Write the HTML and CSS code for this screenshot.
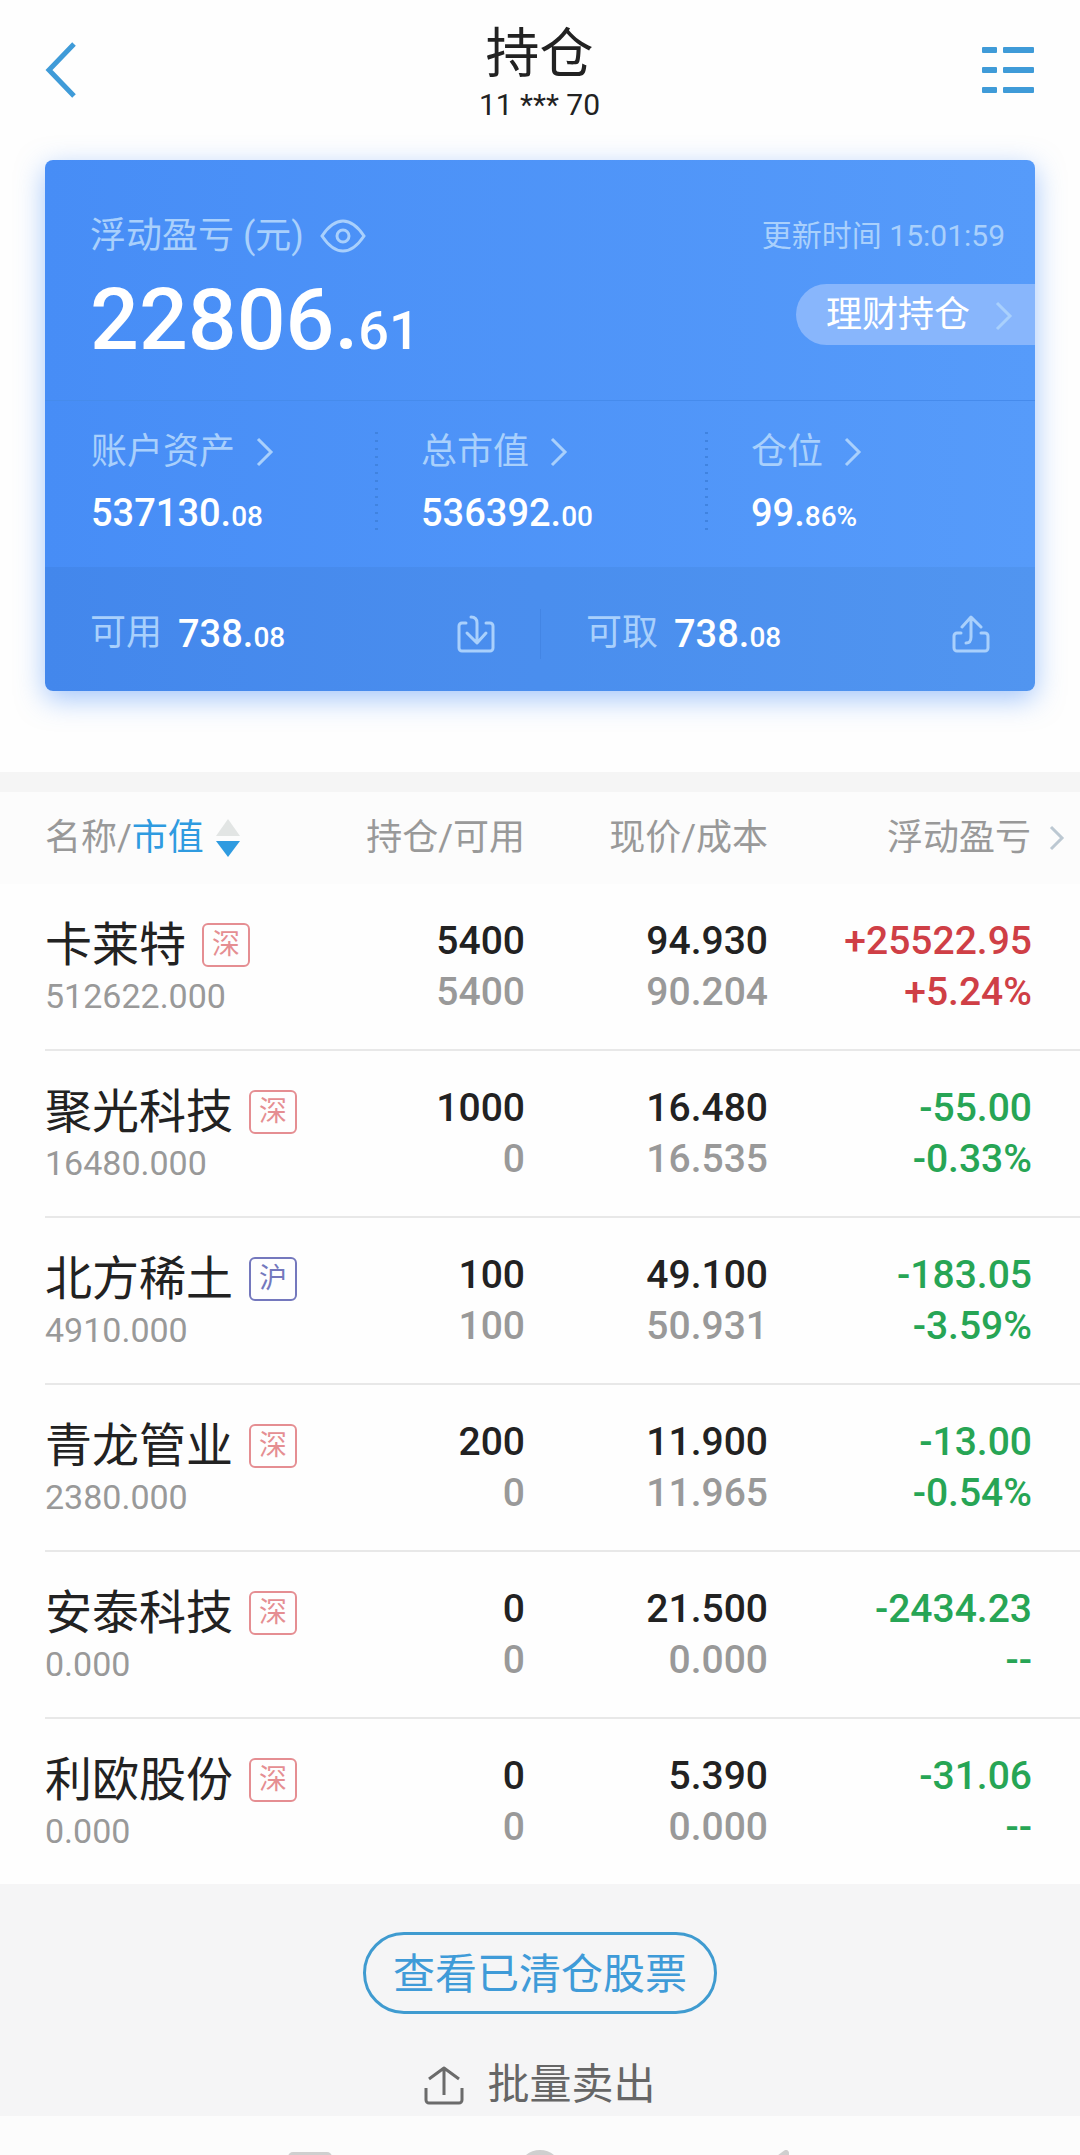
FILE: index.html
```html
<!DOCTYPE html>
<html lang="zh-CN">
<head>
<meta charset="utf-8">
<meta name="viewport" content="width=device-width, initial-scale=1">
<title>持仓</title>
<link rel="stylesheet" href="styles.css">
</head>
<body>
<header class="topbar">
  <button class="icon-button" type="button" aria-label="返回">
    <svg width="32" height="56" viewBox="0 0 32 56" fill="none" stroke="#3f9bd8" stroke-width="5"><path d="M29 2 4 28l25 26"/></svg>
  </button>
  <div class="topbar-title">
    <h1>持仓</h1>
    <p>11 *** 70</p>
  </div>
  <button class="icon-button menu" type="button" aria-label="菜单">
    <svg width="52" height="46" viewBox="0 0 52 46" fill="#3f9bd8"><rect width="15" height="6" rx="1"/><rect x="21" width="31" height="6" rx="1"/><rect y="20" width="15" height="6" rx="1"/><rect x="21" y="20" width="31" height="6" rx="1"/><rect y="40" width="15" height="6" rx="1"/><rect x="21" y="40" width="31" height="6" rx="1"/></svg>
  </button>
</header>

<main>
  <section class="card">
    <div class="summary">
      <div class="profit">
        <div class="profit-label">
          <span>浮动盈亏 (元)</span>
          <button class="icon-button" type="button" aria-label="隐藏金额">
            <svg width="46" height="34" viewBox="0 0 46 34" fill="none" stroke="#a9d0fc" stroke-width="3"><path d="M2 17C8 8 15 2 23 2s15 6 21 15c-6 9-13 15-21 15S8 26 2 17Z"/><circle cx="23" cy="17" r="6"/></svg>
          </button>
        </div>
        <p class="profit-value">22806.<small>61</small></p>
      </div>
      <div class="summary-side">
        <p class="updated">更新时间 <time>15:01:59</time></p>
        <a class="pill" href="#">理财持仓
          <svg class="chevron" width="20" height="30" viewBox="0 0 20 30"><path d="m3 2 13 13L3 28"/></svg>
        </a>
      </div>
    </div>
    <ul class="stats">
      <li>
        <a class="stat-label" href="#">账户资产 <svg class="chevron" width="20" height="30" viewBox="0 0 20 30"><path d="m3 2 13 13L3 28"/></svg></a>
        <p class="amount">537130.<small>08</small></p>
      </li>
      <li>
        <a class="stat-label" href="#">总市值 <svg class="chevron" width="20" height="30" viewBox="0 0 20 30"><path d="m3 2 13 13L3 28"/></svg></a>
        <p class="amount">536392.<small>00</small></p>
      </li>
      <li>
        <a class="stat-label" href="#">仓位 <svg class="chevron" width="20" height="30" viewBox="0 0 20 30"><path d="m3 2 13 13L3 28"/></svg></a>
        <p class="amount">99.<small>86%</small></p>
      </li>
    </ul>
    <div class="funds">
      <div class="fund">
        <span class="fund-label">可用</span>
        <span class="amount">738.<small>08</small></span>
        <button class="icon-button" type="button" aria-label="转入">
          <svg width="38" height="38" viewBox="0 0 38 38" fill="none" stroke="#a9d0fc" stroke-width="3" stroke-linecap="round" stroke-linejoin="round"><path d="M9 8H5a3 3 0 0 0-3 3v22a3 3 0 0 0 3 3h28a3 3 0 0 0 3-3V11a3 3 0 0 0-3-3h-4M14 2c4 0 6 2 6 6v19M10 18l10 10 9-10"/></svg>
        </button>
      </div>
      <div class="fund">
        <span class="fund-label">可取</span>
        <span class="amount">738.<small>08</small></span>
        <button class="icon-button" type="button" aria-label="转出">
          <svg width="38" height="38" viewBox="0 0 38 38" fill="none" stroke="#a9d0fc" stroke-width="3" stroke-linecap="round" stroke-linejoin="round"><path d="M9 18H5a3 3 0 0 0-3 3v12a3 3 0 0 0 3 3h28a3 3 0 0 0 3-3V21a3 3 0 0 0-3-3h-4M14 28c4 0 5-2 5-6V3M10 12l9-10 10 10"/></svg>
        </button>
      </div>
    </div>
  </section>

  <section class="holdings">
    <table>
      <thead>
        <tr>
          <th class="col-name" scope="col"><button class="sort" type="button"><span>名称/<b>市值</b></span><svg width="24" height="40" viewBox="0 0 24 40"><path d="M12 1l12 17H0z" fill="#e2e5e4"/><path d="M12 39l12-16H0z" fill="#2f9be0"/></svg></button></th>
          <th class="col-qty" scope="col">持仓/可用</th>
          <th class="col-price" scope="col">现价/成本</th>
          <th class="col-profit" scope="col"><div class="more">浮动盈亏<svg width="16" height="26" viewBox="0 0 16 26" fill="none" stroke="#bcc8d2" stroke-width="3"><path d="m2 2 11 11L2 24"/></svg></div></th>
        </tr>
      </thead>
      <tbody>
        <tr>
          <td><div class="stock">卡莱特 <span class="badge sz">深</span></div><div class="worth">512622.000</div></td>
          <td><div>5400</div><div class="muted">5400</div></td>
          <td><div>94.930</div><div class="muted">90.204</div></td>
          <td class="up"><div>+25522.95</div><div>+5.24%</div></td>
        </tr>
        <tr>
          <td><div class="stock">聚光科技 <span class="badge sz">深</span></div><div class="worth">16480.000</div></td>
          <td><div>1000</div><div class="muted">0</div></td>
          <td><div>16.480</div><div class="muted">16.535</div></td>
          <td class="down"><div>-55.00</div><div>-0.33%</div></td>
        </tr>
        <tr>
          <td><div class="stock">北方稀土 <span class="badge sh">沪</span></div><div class="worth">4910.000</div></td>
          <td><div>100</div><div class="muted">100</div></td>
          <td><div>49.100</div><div class="muted">50.931</div></td>
          <td class="down"><div>-183.05</div><div>-3.59%</div></td>
        </tr>
        <tr>
          <td><div class="stock">青龙管业 <span class="badge sz">深</span></div><div class="worth">2380.000</div></td>
          <td><div>200</div><div class="muted">0</div></td>
          <td><div>11.900</div><div class="muted">11.965</div></td>
          <td class="down"><div>-13.00</div><div>-0.54%</div></td>
        </tr>
        <tr>
          <td><div class="stock">安泰科技 <span class="badge sz">深</span></div><div class="worth">0.000</div></td>
          <td><div>0</div><div class="muted">0</div></td>
          <td><div>21.500</div><div class="muted">0.000</div></td>
          <td class="down"><div>-2434.23</div><div>--</div></td>
        </tr>
        <tr>
          <td><div class="stock">利欧股份 <span class="badge sz">深</span></div><div class="worth">0.000</div></td>
          <td><div>0</div><div class="muted">0</div></td>
          <td><div>5.390</div><div class="muted">0.000</div></td>
          <td class="down"><div>-31.06</div><div>--</div></td>
        </tr>
      </tbody>
    </table>
  </section>

  <section class="actions">
    <button class="cleared" type="button">查看已清仓股票</button>
    <button class="batch" type="button">
      <svg width="40" height="40" viewBox="0 0 40 40" fill="none" stroke="#6b6b6b" stroke-width="3" stroke-linejoin="round"><path d="M2 23v12a3 3 0 0 0 3 3h30a3 3 0 0 0 3-3V23M20 30V3M5 14 20 3l15 11"/></svg>
      批量卖出
    </button>
  </section>
</main>

<nav class="system-nav" aria-label="系统导航">
  <svg width="44" height="44" viewBox="0 0 44 44"><rect y="2" width="44" height="42" rx="5" fill="#cfcfcf"/></svg>
  <svg width="44" height="44" viewBox="0 0 44 44"><circle cx="22" cy="22" r="19" fill="none" stroke="#cfcfcf" stroke-width="6"/></svg>
  <svg width="44" height="44" viewBox="0 0 44 44"><path d="M38 3v38L12 22z" fill="none" stroke="#cfcfcf" stroke-width="6" stroke-linejoin="round"/></svg>
</nav>
</body>
</html>
```
FILE: styles.css
```css
* {
  box-sizing: border-box;
}

html {
  height: 100%;
}

body {
  margin: 0;
  height: 100%;
  overflow: hidden;
  background: #fefefe;
  color: #222;
  font-family: Roboto, "Noto Sans CJK SC", sans-serif;
  line-height: 1.2;
}

h1, p, ul {
  margin: 0;
  padding: 0;
  font-weight: 400;
}

ul {
  list-style: none;
}

svg {
  display: block;
  flex: none;
}

small {
  font-size: 28px;
  line-height: 0;
}

a {
  color: inherit;
  text-decoration: none;
}

button {
  padding: 0;
  border: 0;
  background: none;
  color: inherit;
  font: inherit;
}

/* Top bar */

.topbar {
  display: grid;
  grid-template-columns: 1fr auto 1fr;
  align-items: center;
  padding: 20px 46px 0 45px;
}

.menu {
  justify-self: end;
}

.topbar .icon-button:first-child {
  justify-self: start;
}

.topbar-title {
  text-align: center;
}

.topbar-title h1 {
  font-size: 54px;
  line-height: 70px;
}

.topbar-title p {
  font-size: 30px;
  line-height: 30px;
}

/* Account card */

.card {
  margin: 40px 45px 0;
  border-radius: 8px;
  background: linear-gradient(90deg, #478df6, #569bfa);
  box-shadow: 0 8px 28px rgba(74, 144, 250, 0.5);
  color: #a9d0fc;
  font-size: 36px;
}

.summary {
  display: flex;
  justify-content: space-between;
  padding: 50px 0 22px 45px;
  border-bottom: 1px solid #468bec;
}

.profit-label {
  display: flex;
  align-items: center;
  gap: 16px;
  line-height: 52px;
}

.profit-value {
  color: #fff;
  font-size: 86px;
  font-weight: 500;
  line-height: 116px;
}

.profit-value small {
  font-size: 54px;
}

.summary-side {
  display: flex;
  flex-direction: column;
  align-items: flex-end;
}

.updated {
  padding-right: 30px;
  font-size: 30px;
  line-height: 52px;
}

.pill {
  display: flex;
  align-items: center;
  gap: 24px;
  height: 61px;
  margin-top: 22px;
  padding: 2px 21px 0 30px;
  border-radius: 31px 0 0 31px;
  background: #88b6fc;
  color: #fff;
}

.chevron {
  fill: none;
  stroke: #a9d0fc;
  stroke-width: 3;
}

.stats {
  display: grid;
  grid-template-columns: repeat(3, 1fr);
  padding: 31px 0 32px;
}

.stats li {
  padding-left: 46px;
}

.stats li + li {
  background: repeating-linear-gradient(#4083e0 0 2px, transparent 2px 8px) left / 3px 100% no-repeat;
}

.stat-label {
  display: flex;
  align-items: center;
  gap: 20px;
  line-height: 40px;
}

.amount {
  color: #fff;
  font-size: 38px;
  font-weight: 500;
  line-height: 44px;
}

.stats .amount {
  margin-top: 19px;
}

.funds {
  display: grid;
  grid-template-columns: 1fr 1fr;
  padding: 42px 0 32px;
  border-radius: 0 0 8px 8px;
  background: rgba(0, 30, 60, 0.05);
}

.fund {
  display: flex;
  align-items: center;
  gap: 16px;
  height: 50px;
  padding: 0 45px;
}

.fund + .fund {
  border-left: 1px solid #4385e4;
}

.fund .icon-button {
  margin-left: auto;
}

/* Holdings table */

.holdings {
  margin-top: 81px;
  padding-left: 45px;
  border-top: 20px solid #f5f5f5;
  overflow: hidden;
}

table {
  width: 100%;
  border-collapse: collapse;
  table-layout: fixed;
  font-size: 39px;
  line-height: 51px;
}

th {
  height: 92px;
  padding: 0;
  background: #fcfcfc;
  color: #999;
  font-size: 36px;
  font-weight: 400;
  text-align: right;
}

th:first-child {
  box-shadow: -45px 0 #fcfcfc;
}

.col-qty {
  width: 180px;
}

.col-price {
  width: 243px;
}

.col-profit {
  width: 312px;
}

.sort {
  display: flex;
  align-items: center;
  gap: 12px;
}

.sort b {
  color: #2f9be0;
  font-weight: 400;
}

.more {
  display: flex;
  align-items: center;
  justify-content: flex-end;
  gap: 18px;
  padding-right: 15px;
}

td {
  padding: 32px 0 31px;
  font-weight: 500;
  text-align: right;
  vertical-align: top;
}

tr + tr td {
  border-top: 2px solid #e8e8e8;
}

td:first-child {
  font-weight: 400;
  text-align: left;
  white-space: nowrap;
}

td:last-child {
  padding-right: 48px;
}

.stock {
  display: flex;
  align-items: center;
  gap: 16px;
  font-size: 47px;
  line-height: 58px;
}

.badge {
  width: 48px;
  border: 2px solid;
  border-radius: 6px;
  font-size: 28px;
  line-height: 40px;
  text-align: center;
}

.sz {
  color: #e58e92;
}

.sh {
  color: #7478bd;
}

.worth {
  color: #999;
  font-size: 34px;
  line-height: 44px;
}

.muted {
  color: #999;
}

.up {
  color: #cf3f46;
}

.down {
  color: #27a555;
}

/* Footer actions */

.actions {
  display: flex;
  flex-direction: column;
  align-items: center;
  gap: 40px;
  padding: 48px 0 0;
  background: #f5f5f6;
  font-size: 42px;
}

.cleared {
  height: 82px;
  padding: 4px 27px 0;
  border: 3px solid #3f9bd0;
  border-radius: 41px;
  color: #3f9bd8;
}

.batch {
  display: flex;
  align-items: center;
  gap: 23px;
  height: 62px;
  color: #666;
}

.system-nav {
  display: flex;
  justify-content: center;
  gap: 186px;
  padding-top: 34px;
  background: #fcfcfc;
}
```
